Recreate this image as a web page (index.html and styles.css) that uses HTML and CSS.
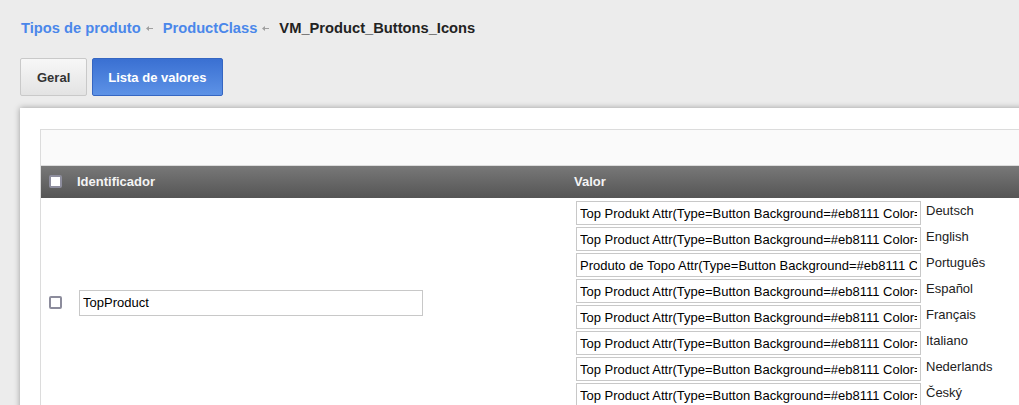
FILE: index.html
```html
<!DOCTYPE html>
<html>
<head>
<meta charset="utf-8">
<link rel="stylesheet" href="styles.css">
</head>
<body>
<div class="page">
  <nav class="crumbs">
    <a class="crumb">Tipos de produto</a>
    <svg class="sep" width="7" height="5" viewBox="0 0 7 5"><path d="M0 2.5 L3 0 V2 H7 V3 H3 V5 Z" fill="#a0a0a0"/></svg>
    <a class="crumb">ProductClass</a>
    <svg class="sep" width="7" height="5" viewBox="0 0 7 5"><path d="M0 2.5 L3 0 V2 H7 V3 H3 V5 Z" fill="#a0a0a0"/></svg>
    <span class="crumb current">VM_Product_Buttons_Icons</span>
  </nav>
  <div class="tabs">
    <button class="tab">Geral</button>
    <button class="tab active">Lista de valores</button>
  </div>
  <div class="panel">
    <div class="grid">
      <div class="toolbar"></div>
      <table class="table">
        <thead>
          <tr class="head">
            <th class="c-check"><span class="cb cb-head"></span></th>
            <th class="c-id">Identificador</th>
            <th class="c-val">Valor</th>
          </tr>
        </thead>
        <tbody>
          <tr>
            <td class="c-check"><span class="cb"></span></td>
            <td class="c-id"><input class="txt id-input" value="TopProduct"></td>
            <td class="c-val">
              <div class="vals">
                <div class="val"><input class="txt v-input" value="Top Produkt Attr(Type=Button Background=#eb8111 Color=#ffffff)"><span class="lang">Deutsch</span></div>
                <div class="val"><input class="txt v-input" value="Top Product Attr(Type=Button Background=#eb8111 Color=#ffffff)"><span class="lang">English</span></div>
                <div class="val"><input class="txt v-input" value="Produto de Topo Attr(Type=Button Background=#eb8111 Color=#ffffff)"><span class="lang">Português</span></div>
                <div class="val"><input class="txt v-input" value="Top Product Attr(Type=Button Background=#eb8111 Color=#ffffff)"><span class="lang">Español</span></div>
                <div class="val"><input class="txt v-input" value="Top Product Attr(Type=Button Background=#eb8111 Color=#ffffff)"><span class="lang">Français</span></div>
                <div class="val"><input class="txt v-input" value="Top Product Attr(Type=Button Background=#eb8111 Color=#ffffff)"><span class="lang">Italiano</span></div>
                <div class="val"><input class="txt v-input" value="Top Product Attr(Type=Button Background=#eb8111 Color=#ffffff)"><span class="lang">Nederlands</span></div>
                <div class="val"><input class="txt v-input" value="Top Product Attr(Type=Button Background=#eb8111 Color=#ffffff)"><span class="lang">Český</span></div>
              </div>
            </td>
          </tr>
        </tbody>
      </table>
    </div>
  </div>
</div>
</body>
</html>
```
FILE: styles.css
```css
html, body {
  margin: 0;
  padding: 0;
  background: #ececec;
  overflow: hidden;
  font-family: "Liberation Sans", Arial, sans-serif;
}

.page {
  padding: 20px 0 0 20px;
  width: 1100px;
}

.crumbs {
  display: flex;
  align-items: center;
  height: 16px;
  padding-left: 1px;
  font-size: 14.7px;
  font-weight: bold;
  line-height: 16px;
}

.crumb {
  color: #4a87ea;
  text-decoration: none;
}

.crumb.current {
  color: #222;
}

.sep {
  margin: 1px 10px 0 5px;
}

.tabs {
  display: flex;
  gap: 5px;
  margin-top: 22px;
}

.tab {
  height: 38px;
  padding: 0 16px;
  border: 1px solid #c9c9c9;
  border-radius: 2px;
  background: linear-gradient(#f7f7f7, #e3e3e3);
  color: #333;
  font-family: "Liberation Sans", Arial, sans-serif;
  font-size: 13px;
  font-weight: bold;
  box-sizing: border-box;
}

.tab.active {
  padding: 0 15px;
  border-color: #3566c2;
  background: linear-gradient(#3a70d2, #5d92e6);
  color: #fff;
}

.panel {
  margin-top: 12px;
  background: #fff;
  padding: 21px 20px 20px 20px;
  box-shadow: 0 0 6px rgba(0, 0, 0, 0.35);
  height: 400px;
}

.grid {
  border: 1px solid #dcdcdc;
  border-bottom: none;
}

.toolbar {
  height: 35px;
  background: #fafafa;
  border-bottom: 1px solid #dcdcdc;
}

.table {
  width: 100%;
  border-collapse: collapse;
  table-layout: fixed;
}

.head {
  height: 32px;
  background: linear-gradient(#787878, #555555);
}

.head th {
  color: #f4f4f4;
  font-size: 13px;
  font-weight: bold;
  text-align: left;
  padding: 0 0 1px 5px;
  vertical-align: middle;
}

.head th.c-check {
  padding-left: 8px;
}

th.c-check, td.c-check {
  width: 23px;
  padding-left: 8px;
}

.c-id {
  width: 492px;
}

td.c-id {
  padding-left: 7px;
  vertical-align: middle;
}

td.c-val {
  padding: 3px 0 0 7px;
  vertical-align: top;
}

td.c-check {
  vertical-align: middle;
}

.cb {
  display: block;
  width: 13px;
  height: 13px;
  box-sizing: border-box;
  border: 2px solid #8c8c9c;
  border-radius: 2px;
  background: #fff;
}

.cb-head {
  border-color: #8e8e9e;
}

.txt {
  box-sizing: border-box;
  border: 1px solid #c8c8c8;
  margin: 0;
  padding: 0 3px;
  font-family: "Liberation Sans", Arial, sans-serif;
  font-size: 13px;
  color: #000;
  background: #fff;
  outline: none;
}

.id-input {
  display: block;
  width: 344px;
  height: 26px;
}

.vals {
  display: flex;
  flex-direction: column;
  gap: 2px;
}

.val {
  display: flex;
  align-items: flex-start;
  height: 24px;
}

.v-input {
  width: 345px;
  height: 24px;
}

.lang {
  margin-left: 5px;
  font-size: 13px;
  line-height: 16px;
  color: #222;
  margin-top: 2px;
}
```
